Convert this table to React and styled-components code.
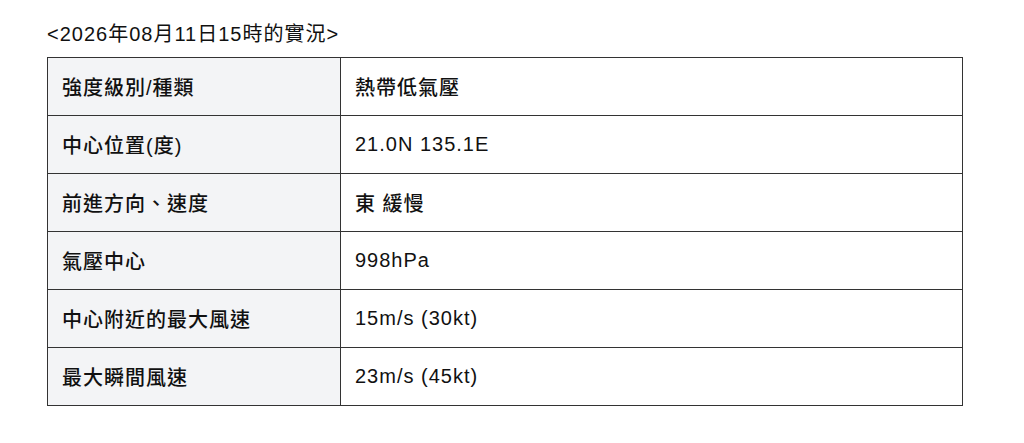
import styled, { createGlobalStyle } from "styled-components";

const GlobalStyle = createGlobalStyle`
  body {
    margin: 0;
    background: #fff;
    font-family: "Liberation Sans", "Noto Sans CJK TC", sans-serif;
    color: #111;
  }
`;

const rows = [
  ["強度級別/種類", "熱帶低氣壓"],
  ["中心位置(度)", "21.0N 135.1E"],
  ["前進方向、速度", "東 緩慢"],
  ["氣壓中心", "998hPa"],
  ["中心附近的最大風速", "15m/s (30kt)"],
  ["最大瞬間風速", "23m/s (45kt)"],
];

const App = () => {
  return (
    <Page>
      <GlobalStyle />
      <Title>&lt;2026年08月11日15時的實況&gt;</Title>
      <Table>
        <tbody>
          {rows.map(([label, value]) => (
            <tr key={label}>
              <Label>{label}</Label>
              <Value>{value}</Value>
            </tr>
          ))}
        </tbody>
      </Table>
    </Page>
  );
};

const Page = styled.div`
  padding: 22px 61px 0 47px;
`;

const Title = styled.h3`
  margin: 0 0 11px;
  font-size: 20px;
  font-weight: 400;
  letter-spacing: 1px;
  line-height: 24px;
`;

const Table = styled.table`
  width: 100%;
  border-collapse: collapse;
  border: 1px solid #333;
  td {
    border: 1px solid #333;
    height: 58px;
    padding: 0 14px;
    font-size: 20px;
    letter-spacing: 1px;
    box-sizing: border-box;
    font-weight: 500;
  }
`;

const Label = styled.td`
  width: 293px;
  background: #f3f4f6;
`;

const Value = styled.td`
  background: #fff;
`;

export default App;
